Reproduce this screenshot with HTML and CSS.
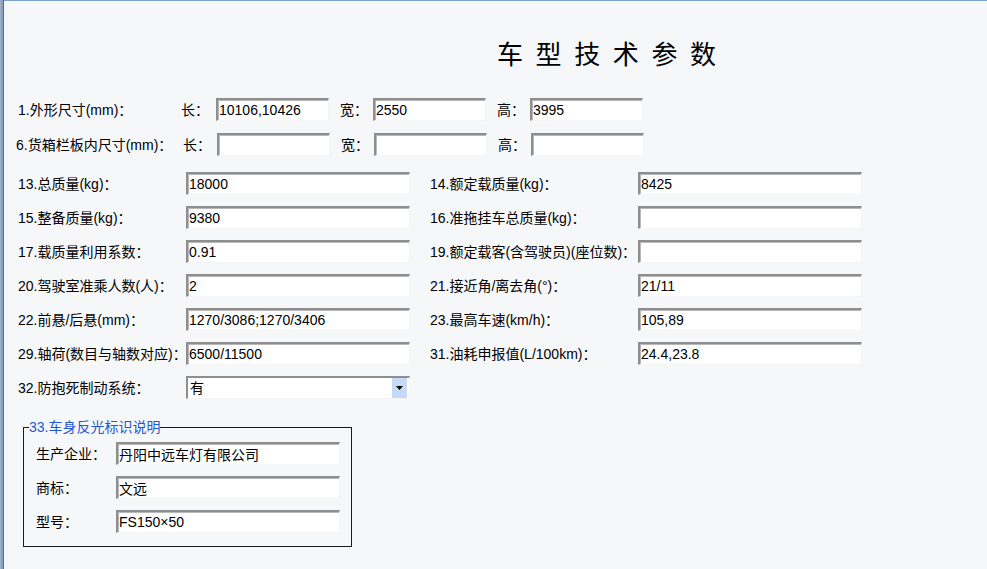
FILE: index.html
```html
<!DOCTYPE html>
<html lang="zh-CN">
<head>
<meta charset="utf-8">
<title>车型技术参数</title>
<link rel="stylesheet" href="styles.css">
</head>
<body>
<div class="page">
  <h1 class="title">车型技术参数</h1>

  <div class="dim-row">
    <span class="dim-label">1.外形尺寸(mm)：</span>
    <span class="dim-key k1">长：</span><input class="field short" value="10106,10426">
    <span class="dim-key">宽：</span><input class="field short" value="2550">
    <span class="dim-key">高：</span><input class="field short" value="3995">
  </div>
  <div class="dim-row second">
    <span class="dim-label wide">6.货箱栏板内尺寸(mm)：</span>
    <span class="dim-key k1 narrow">长：</span><input class="field short" value="">
    <span class="dim-key">宽：</span><input class="field short" value="">
    <span class="dim-key">高：</span><input class="field short" value="">
  </div>

  <div class="grid">
    <div class="cell"><span class="g-label">13.总质量(kg)：</span><input class="field long" value="18000"></div>
    <div class="cell right"><span class="g-label r">14.额定载质量(kg)：</span><input class="field long" value="8425"></div>

    <div class="cell"><span class="g-label">15.整备质量(kg)：</span><input class="field long" value="9380"></div>
    <div class="cell right"><span class="g-label r">16.准拖挂车总质量(kg)：</span><input class="field long" value=""></div>

    <div class="cell"><span class="g-label">17.载质量利用系数：</span><input class="field long" value="0.91"></div>
    <div class="cell right"><span class="g-label r">19.额定载客(含驾驶员)(座位数)：</span><input class="field long" value=""></div>

    <div class="cell"><span class="g-label">20.驾驶室准乘人数(人)：</span><input class="field long" value="2"></div>
    <div class="cell right"><span class="g-label r">21.接近角/离去角(°)：</span><input class="field long" value="21/11"></div>

    <div class="cell"><span class="g-label">22.前悬/后悬(mm)：</span><input class="field long" value="1270/3086;1270/3406"></div>
    <div class="cell right"><span class="g-label r">23.最高车速(km/h)：</span><input class="field long" value="105,89"></div>

    <div class="cell"><span class="g-label">29.轴荷(数目与轴数对应)：</span><input class="field long" value="6500/11500"></div>
    <div class="cell right"><span class="g-label r">31.油耗申报值(L/100km)：</span><input class="field long" value="24.4,23.8"></div>

    <div class="cell"><span class="g-label">32.防抱死制动系统：</span>
      <div class="select"><span class="select-text">有</span><span class="select-btn"><svg width="7" height="4" viewBox="0 0 7 4"><path d="M0 0h7L3.5 4z" fill="#000"/></svg></span></div>
    </div>
  </div>

  <fieldset class="box">
    <legend class="box-legend">33.车身反光标识说明</legend>
    <div class="box-row"><span class="box-label">生产企业：</span><input class="field long" value="丹阳中远车灯有限公司"></div>
    <div class="box-row"><span class="box-label">商标：</span><input class="field long" value="文远"></div>
    <div class="box-row"><span class="box-label">型号：</span><input class="field long" value="FS150×50"></div>
  </fieldset>
</div>
</body>
</html>
```

FILE: styles.css
```css
html, body {
  margin: 0;
  padding: 0;
}
body {
  font-family: "Liberation Sans", "Noto Sans CJK SC", sans-serif;
  font-size: 14px;
  color: #000;
}
.page {
  width: 987px;
  height: 569px;
  box-sizing: border-box;
  background: #f5f7f9;
  box-shadow: inset 1px 0 #a3b1c2, inset 3px 0 #7fa1cd, inset 4px 0 #5d6e84, inset 0 1px #7fa1cd;
  padding-top: 1px;
  overflow: hidden;
}
.title {
  margin: 37px 0 0 497px;
  height: 30px;
  line-height: 30px;
  font-size: 26px;
  font-weight: normal;
  letter-spacing: 12.6px;
  font-family: "Noto Sans CJK SC", sans-serif;
  white-space: nowrap;
}
.field {
  box-sizing: border-box;
  height: 23px;
  margin: 0;
  padding: 0 1px;
  font: 14px "Liberation Sans", "Noto Sans CJK SC", sans-serif;
  color: #000;
  background: #fff;
  border-style: solid;
  border-width: 2px 1px 1px 2px;
  border-color: #8e8e8e #f4f4f4 #f4f4f4 #8e8e8e;
  box-shadow: inset 1px 1px #b8b8b8;
  outline: none;
}
.short { width: 113px; flex: none; }
.long { width: 224px; flex: none; }

.dim-row {
  display: flex;
  align-items: center;
  height: 23px;
  margin-top: 30px;
  margin-left: 18px;
  line-height: 20px;
}
.dim-row.second {
  margin-top: 12px;
  margin-left: 16px;
}
.dim-label {
  width: 163px;
  flex: none;
  white-space: nowrap;
}
.dim-label.wide { width: 167px; }
.dim-key {
  width: 33px;
  margin-left: 11px;
  flex: none;
}
.dim-key.k1 { width: 35px; margin-left: 0; }
.dim-key.k1.narrow { width: 34px; }

.grid {
  display: grid;
  grid-template-columns: 392px 452px;
  row-gap: 11px;
  margin-top: 16px;
  margin-left: 18px;
  line-height: 20px;
}
.cell {
  display: flex;
  align-items: center;
  height: 23px;
}
.cell.right { padding-left: 20px; }
.g-label {
  width: 168px;
  flex: none;
  white-space: nowrap;
}
.g-label.r { width: 208px; }

.select {
  box-sizing: border-box;
  width: 224px;
  height: 23px;
  flex: none;
  display: flex;
  align-items: stretch;
  background: #fff;
  border-style: solid;
  border-width: 2px 1px 1px 2px;
  border-color: #8e8e8e #f4f4f4 #f4f4f4 #8e8e8e;
}
.select-text {
  flex: 1;
  padding-left: 2px;
  line-height: 20px;
}
.select-btn {
  width: 15px;
  margin-right: 2px;
  background: #c5daf5;
  display: flex;
  align-items: center;
  justify-content: center;
}

.box {
  box-sizing: border-box;
  width: 329px;
  margin: 20px 0 0 23px;
  padding: 7px 11px 13px 5px;
  border: 1px solid #1a1a1a;
  min-inline-size: 0;
}
.box-legend {
  padding: 0;
  line-height: 16px;
  color: #1f56d6;
  font-size: 14px;
}
.box-row {
  display: flex;
  align-items: center;
  height: 23px;
  margin-left: 7px;
  line-height: 20px;
}
.box-row + .box-row { margin-top: 11px; }
.box-label {
  width: 80px;
  flex: none;
}
```
